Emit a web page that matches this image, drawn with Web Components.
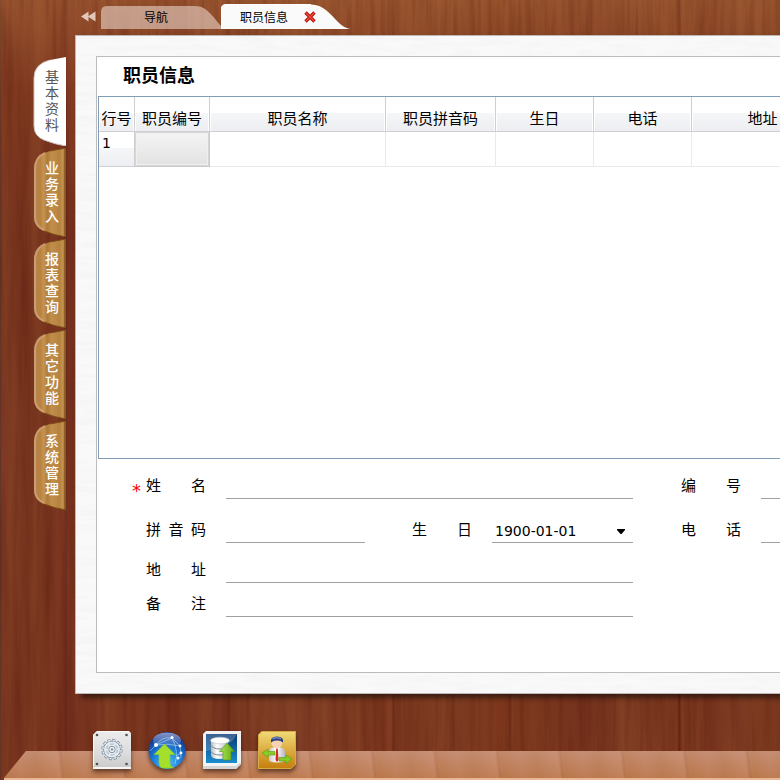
<!DOCTYPE html>
<html lang="zh-CN">
<head>
<meta charset="utf-8">
<meta name="viewport" content="width=device-width, initial-scale=1">
<title>职员信息</title>
<style>
  html, body {
    height: 100%;
  }
  body {
    margin: 0;
    overflow: hidden;
    color: #000;
    font-family: "Noto Sans CJK SC", sans-serif;
    font-size: 15px;
  }
</style>
</head>
<body>
<desk-app>
  <tab-strip slot="tabs">
    <page-tab>导航</page-tab>
    <page-tab active>职员信息</page-tab>
  </tab-strip>
  <side-nav slot="side">
    <side-tab active>基本资料</side-tab>
    <side-tab>业务录入</side-tab>
    <side-tab>报表查询</side-tab>
    <side-tab>其它功能</side-tab>
    <side-tab>系统管理</side-tab>
  </side-nav>
  <paper-panel heading="职员信息">
    <staff-table></staff-table>
    <staff-form>
      <form-field label="姓　　名" required wide></form-field>
      <form-field label="编　　号"></form-field>
      <form-field label="拼&ensp;音&ensp;码"></form-field>
      <form-field label="生　　日" value="1900-01-01" type="select"></form-field>
      <form-field label="电　　话"></form-field>
      <form-field label="地　　址" wide line></form-field>
      <form-field label="备　　注" wide line></form-field>
    </staff-form>
  </paper-panel>
  <app-dock slot="dock"></app-dock>
</desk-app>

<script>
class DeskApp extends HTMLElement {
  connectedCallback() {
    this.attachShadow({ mode: 'open' });
    this.shadowRoot.innerHTML = `
      <style>
        :host {
          display: grid;
          grid-template: 35px minmax(0, 1fr) 86px / 75px minmax(0, 1fr);
          position: relative;
          z-index: 0;
          height: 100%;
          min-height: 640px;
          overflow: hidden;
          background:
            linear-gradient(rgba(190, 122, 66, .42), rgba(160, 80, 40, .2) 90px, rgba(60, 10, 0, 0) 240px),
            linear-gradient(90deg,
              #5e3327 0, #5e3327 1px, #79351f 2px, #74311c 28px, #7c3920 34px, #722c1a 64px,
              #65261a 66px, #742f1d 68px, #7b371f 110px, #722e1a 170px, #7d3a22 205px,
              #76321d 226px, #662718 229px, #7b3820 231px, #7e3d24 290px, #7a351d 392px,
              #672716 393px, #7a371e 395px, #7c3a20 460px, #783219 508px, #642414 510px,
              #7b371d 512px, #73301c 590px, #7c3a22 620px, #7b371e 677px, #622111 679px,
              #7b381f 682px, #74301b 710px, #7d3b22 740px, #77341b 100%);
        }
        .grain {
          position: absolute;
          inset: 0;
          z-index: -1;
          width: 100%;
          height: 100%;
        }
        .tabs, .dock {
          grid-column: 1 / -1;
        }
        .panel {
          min-width: 0;
        }
      </style>
      <svg class="grain" aria-hidden="true">
        <filter id="wood" x="0" y="0" width="100%" height="100%" color-interpolation-filters="sRGB">
          <feTurbulence type="fractalNoise" baseFrequency="0.16 0.008" numOctaves="4" seed="8"/>
          <feColorMatrix values="0 0 0 0 .3  0 0 0 0 .08  0 0 0 0 .03  .6 0 0 0 -.24"/>
        </filter>
        <filter id="sheen" x="0" y="0" width="100%" height="100%" color-interpolation-filters="sRGB">
          <feTurbulence type="fractalNoise" baseFrequency="0.06 0.003" numOctaves="3" seed="3"/>
          <feColorMatrix values="0 0 0 0 .7  0 0 0 0 .42  0 0 0 0 .25  .4 0 0 0 -.17"/>
        </filter>
        <rect width="100%" height="100%" filter="url(#wood)"/>
        <rect width="100%" height="100%" filter="url(#sheen)"/>
      </svg>
      <header class="tabs"><slot name="tabs"></slot></header>
      <slot name="side"></slot>
      <main class="panel"><slot></slot></main>
      <footer class="dock"><slot name="dock"></slot></footer>
    `;
  }
}

class TabStrip extends HTMLElement {
  connectedCallback() {
    this.attachShadow({ mode: 'open' });
    this.shadowRoot.innerHTML = `
      <style>
        :host {
          display: flex;
          align-items: flex-end;
          height: 29px;
          padding-left: 81px;
        }
        button {
          width: 20px;
          height: 24px;
          padding: 0;
          border: 0;
          background: none;
          cursor: pointer;
        }
        svg {
          display: block;
        }
      </style>
      <button type="button" aria-label="向左滚动">
        <svg width="16" height="24" viewBox="0 0 16 24"><path d="M0 11.500 7.500 6.500V11L14.500 6.500V16.500L7.500 12V16.500z" fill="#e3c6ba"/></svg>
      </button>
      <slot></slot>
    `;
  }
}

class PageTab extends HTMLElement {
  connectedCallback() {
    const active = this.hasAttribute('active');
    const shape = active
      ? '<svg width="130" height="25" viewBox="0 0 130 25"><path d="M0 25V5Q0 .5 5 .5H90C103 .5 110 11 117 18Q124 25 130 25z" fill="#fafafa"/><path d="M.5 24V5Q.5 .5 5 .5H90" fill="none" stroke="#fff"/></svg>'
      : '<svg width="120" height="25" viewBox="0 0 120 25"><path d="M0 25V8Q0 2 6 2H94C106 2 112 13 120 22V25z" fill="#e6cfc4" fill-opacity=".62"/></svg>';
    const close = active
      ? '<button class="close" type="button" aria-label="关闭"><svg width="12" height="12" viewBox="0 0 12 12"><path d="M1.500 1.500 10.500 10.500M10.500 1.500 1.500 10.500" stroke="#b3130c" stroke-width="3.400"/><path d="M2 2 10 10M10 2 2 10" stroke="#f04a3a" stroke-width="1.400"/></svg></button>'
      : '';
    this.attachShadow({ mode: 'open' });
    this.shadowRoot.innerHTML = `
      <style>
        :host {
          display: flex;
          align-items: center;
          position: relative;
          z-index: 0;
          box-sizing: border-box;
          width: ${active ? 130 : 120}px;
          height: 25px;
          padding-left: ${active ? 19 : 43}px;
          gap: 16px;
        }
        .shape {
          position: absolute;
          inset: 0;
          z-index: -1;
        }
        button {
          padding: 0;
          border: 0;
          background: none;
          color: inherit;
          font: 12px/24px "Noto Sans CJK SC", sans-serif;
          cursor: pointer;
        }
        svg {
          display: block;
        }
      </style>
      <div class="shape">${shape}</div>
      <button type="button"><slot></slot></button>
      ${close}
    `;
  }
}

class SideNav extends HTMLElement {
  connectedCallback() {
    this.attachShadow({ mode: 'open' });
    this.shadowRoot.innerHTML = `
      <style>
        nav {
          display: flex;
          flex-direction: column;
          align-items: flex-end;
          gap: 2px;
          padding: 22px 9px 0 0;
        }
      </style>
      <nav><slot></slot></nav>
    `;
  }
}

class SideTab extends HTMLElement {
  connectedCallback() {
    const active = this.hasAttribute('active');
    this.attachShadow({ mode: 'open' });
    this.shadowRoot.innerHTML = `
      <style>
        :host {
          display: block;
          color: ${active ? '#555' : '#fff'};
        }
        button {
          display: flex;
          justify-content: center;
          align-items: center;
          position: relative;
          z-index: 0;
          box-sizing: border-box;
          width: 33px;
          height: 89px;
          padding: 0 0 4px 5px;
          border: 0;
          background: none;
          color: inherit;
          font: ${active ? 400 : 500} 14px/16px "Noto Sans CJK SC", sans-serif;
          cursor: pointer;
        }
        svg {
          position: absolute;
          inset: 0;
          z-index: -1;
        }
        span {
          width: 14px;
          word-break: break-all;
        }
      </style>
      <button type="button">
        <svg width="33" height="89" viewBox="0 0 33 89" aria-hidden="true">
          <defs>
            <linearGradient id="wood">
              <stop offset="0" stop-color="#b58350"/>
              <stop offset=".2" stop-color="#b9833f"/>
              <stop offset=".3" stop-color="#c59350"/>
              <stop offset=".42" stop-color="#b07b38"/>
              <stop offset=".55" stop-color="#c28e4b"/>
              <stop offset=".8" stop-color="#b68240"/>
              <stop offset=".9" stop-color="#c49350"/>
              <stop offset="1" stop-color="#8a5a1d"/>
            </linearGradient>
          </defs>
          <path d="M33 0 17 3Q1 7 1 21V69Q1 79 11 83Q21 87 33 89z" fill="${active ? '#fff' : 'url(#wood)'}"/>
          ${active
            ? '<path d="M17 3Q1 7 1 21V69Q1 79 11 83Q21 87 33 89" fill="none" stroke="#ccc5c2"/>'
            : `<path d="M12 5Q2 9 2 21V69Q2 78 11 82" fill="none" stroke="#d3a583" stroke-opacity=".75" stroke-width="2"/>
               <path d="M33 0 17 3M11 83Q21 87 33 89M32 0V89" fill="none" stroke="#7d4e16"/>`}
        </svg>
        <span><slot></slot></span>
      </button>
    `;
  }
}

class PaperPanel extends HTMLElement {
  connectedCallback() {
    this.attachShadow({ mode: 'open' });
    this.shadowRoot.innerHTML = `
      <style>
        :host {
          display: block;
          position: relative;
          z-index: 0;
          box-sizing: border-box;
          height: 100%;
          min-width: 960px;
          padding: 20px;
          border: 1px solid #bdb9b8;
          background: #f9f9f9;
          box-shadow: 6px 4px 5px rgba(20, 12, 8, .6);
        }
        .fibre {
          position: absolute;
          inset: 0;
          z-index: -1;
          width: 100%;
          height: 100%;
        }
        section {
          display: flex;
          flex-direction: column;
          box-sizing: border-box;
          height: 100%;
          padding: 0 1px 55px;
          border: 1px solid #bcbcbc;
          background: #fff;
        }
        h1 {
          margin: 0;
          padding: 0 0 4px 25px;
          font-size: 18px;
          font-weight: 700;
          line-height: 35px;
        }
      </style>
      <svg class="fibre" aria-hidden="true">
        <filter id="paper" x="0" y="0" width="100%" height="100%">
          <feTurbulence type="fractalNoise" baseFrequency="0.03 0.2" numOctaves="3" seed="5"/>
          <feColorMatrix values="0 0 0 0 .5  0 0 0 0 .5  0 0 0 0 .5  .16 0 0 0 -.06"/>
        </filter>
        <rect width="100%" height="100%" filter="url(#paper)"/>
      </svg>
      <section>
        <h1>${this.getAttribute('heading')}</h1>
        <slot></slot>
      </section>
    `;
  }
}

class StaffTable extends HTMLElement {
  connectedCallback() {
    this.attachShadow({ mode: 'open' });
    this.shadowRoot.innerHTML = `
      <style>
        :host {
          display: block;
          flex: 1;
          min-height: 0;
          overflow: hidden;
          border: 1px solid #7f9db9;
        }
        table {
          width: 100%;
          table-layout: fixed;
          border-collapse: separate;
          border-spacing: 0;
        }
        .no { width: 36px; }
        .code { width: 75px; }
        .name { width: 176px; }
        .pinyin { width: 110px; }
        .short { width: 98px; }
        .address { width: 142px; }
        th, td {
          box-sizing: border-box;
          height: 35px;
          padding: 0;
          border-right: 1px solid #ece9e9;
          border-bottom: 1px solid #ece9e9;
          font-weight: 400;
          white-space: nowrap;
        }
        thead th {
          padding-top: 8px;
          border-color: #cfcfcf;
          background: linear-gradient(#fff 16px, #f5f6f8 16px, #eceef1);
          box-shadow: inset 1px 0 #fff, inset -1px 0 #fff;
          line-height: 24px;
        }
        tbody th {
          padding-left: 3px;
          border-color: #cfcfcf;
          background: linear-gradient(#fff 16px, #f5f6f8 16px, #eceef1);
          font: 14px/23px "DejaVu Sans", sans-serif;
          text-align: left;
          vertical-align: top;
        }
        .selected {
          border-color: #c9c9c9;
          background: linear-gradient(#f4f4f4, #e2e2e2);
          box-shadow: inset 0 0 0 1px #d6d6d6, inset 0 0 0 2px #f0f0f0;
        }
      </style>
      <table>
        <colgroup>
          <col class="no"><col class="code"><col class="name"><col class="pinyin">
          <col class="short"><col class="short"><col class="address"><col>
        </colgroup>
        <thead>
          <tr>
            <th scope="col">行号</th>
            <th scope="col">职员编号</th>
            <th scope="col">职员名称</th>
            <th scope="col">职员拼音码</th>
            <th scope="col">生日</th>
            <th scope="col">电话</th>
            <th scope="col">地址</th>
            <th scope="col"></th>
          </tr>
        </thead>
        <tbody>
          <tr>
            <th scope="row">1</th>
            <td class="selected"></td>
            <td></td>
            <td></td>
            <td></td>
            <td></td>
            <td></td>
            <td></td>
          </tr>
        </tbody>
      </table>
    `;
  }
}

class StaffForm extends HTMLElement {
  connectedCallback() {
    this.attachShadow({ mode: 'open' });
    this.shadowRoot.innerHTML = `
      <style>
        form {
          display: grid;
          grid-template-columns: 74px 139px 87px 141px 88px minmax(140px, 1fr);
          grid-template-rows: 40px 44px 40px 34px;
          column-gap: 20px;
          align-items: end;
          padding: 0 20px 0 34px;
        }
      </style>
      <form><slot></slot></form>
    `;
  }
}

class FormField extends HTMLElement {
  connectedCallback() {
    const value = this.getAttribute('value') || '';
    const control = this.getAttribute('type') === 'select'
      ? `<div class="select">
           <select id="control"><option>${value}</option></select>
           <svg width="8" height="5" viewBox="0 0 8 5" aria-hidden="true"><path d="M0 0H8V1L4.500 5H3.500L0 1z"/></svg>
         </div>`
      : `<input id="control" type="text" value="${value}">`;
    this.attachShadow({ mode: 'open' });
    this.shadowRoot.innerHTML = `
      <style>
        :host {
          display: grid;
          grid-template-columns: subgrid;
          grid-column: span 2;
          line-height: 26px;
        }
        :host([wide]) {
          grid-column: span 4;
        }
        :host([line]) {
          grid-column: 1 / 5;
        }
        label {
          text-align: right;
          white-space: nowrap;
        }
        .star {
          margin-right: 5px;
          color: #f00;
          font: 18px/1 "DejaVu Sans", sans-serif;
          vertical-align: -6px;
          line-height: 0;
        }
        input, select {
          box-sizing: border-box;
          width: 100%;
          height: 27px;
          margin: 0;
          padding: 4px 3px 0;
          border: 0;
          border-bottom: 1px solid #a0a0a0;
          border-radius: 0;
          outline: 0;
          background: transparent;
          color: inherit;
          font: 14px/20px "DejaVu Sans", sans-serif;
          appearance: none;
        }
        input, .select {
          grid-column: 2 / -1;
        }
        .select {
          display: grid;
          align-items: center;
        }
        .select > * {
          grid-area: 1 / 1;
        }
        svg {
          justify-self: end;
          margin: 4px 8px 0 0;
          pointer-events: none;
        }
      </style>
      <label for="control">${this.hasAttribute('required') ? '<span class="star">*</span>' : ''}${this.getAttribute('label')}</label>
      ${control}
    `;
  }
}

class AppDock extends HTMLElement {
  connectedCallback() {
    this.attachShadow({ mode: 'open' });
    this.shadowRoot.innerHTML = `
      <style>
        :host {
          display: block;
          position: relative;
          z-index: 0;
          height: 86px;
        }
        .shelf {
          position: absolute;
          inset: auto 0 0 4px;
          z-index: -1;
          height: 29px;
          border-bottom: 2px solid #eab794;
          box-sizing: border-box;
        }
        .board {
          height: 27px;
          clip-path: polygon(22px 0, 100% 0, 100% 100%, 0 100%);
          background:
            linear-gradient(rgba(205, 160, 145, .4), rgba(185, 115, 65, .4)),
            repeating-linear-gradient(83deg, #b9784f 0, #c18362 18px, #bb7b55 34px, #c68a6a 56px, #b37049 59px, #bd7d58 62px);
        }
        nav {
          display: flex;
          gap: 17px;
          padding: 37px 0 0 93px;
        }
        button {
          width: 38px;
          height: 38px;
          padding: 0;
          border: 0;
          background: none;
          cursor: pointer;
          filter: drop-shadow(0 3px 2px rgba(40, 15, 5, .6));
        }
        svg {
          display: block;
        }
      </style>
      <div class="shelf"><div class="board"></div></div>
      <nav>
        <button type="button" aria-label="设置">
          <svg width="38" height="38" viewBox="0 0 38 38">
            <defs><linearGradient id="metal" x2="0" y2="1"><stop stop-color="#ececec"/><stop offset=".6" stop-color="#dcdcdc"/><stop offset="1" stop-color="#c9c9c9"/></linearGradient></defs>
            <path d="M4 0H36L38 2V38H0V4z" fill="url(#metal)"/>
            <path d="M.5 35V4L4 .5H36" fill="none" stroke="#fafafa"/>
            <path d="M0 37H38" stroke="#f6f6f6" stroke-width="2"/>
            <g fill="#505050"><circle cx="4" cy="4" r="1.300"/><circle cx="33.500" cy="4" r="1.300"/><circle cx="4" cy="33" r="1.300"/><circle cx="33.500" cy="33" r="1.300"/></g>
            <circle cx="19" cy="18.500" r="9.500" fill="none" stroke="#8293a4" stroke-width="2.400" stroke-dasharray="3 1.970"/>
            <circle cx="19" cy="18.500" r="8.500" fill="#e6ebf0" stroke="#8293a4"/>
            <circle cx="19" cy="18.500" r="9.200" fill="none" stroke="#e9eef3" stroke-width="1.400" stroke-dasharray="2 2.820" stroke-dashoffset="-.5"/>
            <circle cx="19" cy="18.500" r="5.500" fill="none" stroke="#b9c4cf" stroke-width="1.600" stroke-dasharray="4 1.760"/>
            <circle cx="19" cy="18.500" r="3.200" fill="#f2f5f8" stroke="#8293a4"/>
            <circle cx="19" cy="18.500" r="1.300" fill="#8796a5"/>
          </svg>
        </button>
        <button type="button" aria-label="上传">
          <svg width="38" height="38" viewBox="0 0 38 38">
            <defs>
              <radialGradient id="globe" cx=".5" cy=".85" r=".9"><stop stop-color="#4cc2fb"/><stop offset=".45" stop-color="#1c7bd8"/><stop offset=".8" stop-color="#113d9c"/><stop offset="1" stop-color="#0c2676"/></radialGradient>
              <linearGradient id="gloss" x2="0" y2="1"><stop stop-color="#fff" stop-opacity=".5"/><stop offset="1" stop-color="#fff" stop-opacity="0"/></linearGradient>
            </defs>
            <circle cx="19" cy="19.500" r="18.500" fill="url(#globe)"/>
            <ellipse cx="19" cy="9.500" rx="14" ry="8" fill="url(#gloss)"/>
            <path d="M8 14 24 7 32 15 33 27M8 14 2 20M8 14Q14 5 24 7M24 7Q31 20 27 33M8 14Q20 12 32 15M28 25 33 22" fill="none" stroke="#c8e9ff" stroke-opacity=".75" stroke-width=".7"/>
            <g fill="#fff"><circle cx="8" cy="14" r="2"/><circle cx="24" cy="6.500" r="1.500"/><circle cx="32" cy="15" r="1.400"/><circle cx="33" cy="22" r="1.400"/><circle cx="30" cy="27" r="1.500"/></g>
            <path d="M16.500 13 27 23.500H22V32Q22 36 26 37H14Q11 36 11 31V23.500H6z" fill="#a4df2c" stroke="#8bc91d" stroke-width=".6"/>
          </svg>
        </button>
        <button type="button" aria-label="数据备份">
          <svg width="38" height="38" viewBox="0 0 38 38">
            <defs>
              <linearGradient id="blue" x2="0" y2="1"><stop stop-color="#0c356b"/><stop offset="1" stop-color="#198ed2"/></linearGradient>
              <linearGradient id="steel"><stop stop-color="#b8bcc0"/><stop offset=".35" stop-color="#fff"/><stop offset="1" stop-color="#b9bec4"/></linearGradient>
              <linearGradient id="green"><stop stop-color="#b0e456"/><stop offset="1" stop-color="#5cab14"/></linearGradient>
            </defs>
            <path d="M3 0H38V33L33 38H0V3z" fill="#f3f3f3"/>
            <path d="M0 35H33L38 31V33L33 38H0z" fill="#d3d5d6"/>
            <path d="M3 3H34V32H3z" fill="url(#blue)"/>
            <path d="M3 3H34Q30 15 3 20z" fill="#a8cbe5" opacity=".3"/>
            <path d="M8 10V24Q8 28 17 28Q25 28 25 24V10z" fill="url(#steel)"/>
            <ellipse cx="17" cy="9.500" rx="9.500" ry="3.300" fill="#fff" stroke="#bcc2c7" stroke-width=".6"/>
            <path d="M7.500 14Q10 18 17 18T25 14M7.500 20Q10 24 17 24T25 20" fill="none" stroke="#7c8a97" stroke-width="1"/>
            <path d="M24 12 31.500 20.500H28V29H20V20.500H16.500z" fill="url(#green)" stroke="#4d9410" stroke-width=".6"/>
          </svg>
        </button>
        <button type="button" aria-label="切换用户">
          <svg width="38" height="38" viewBox="0 0 38 38">
            <defs>
              <linearGradient id="gold" x2="0" y2="1"><stop stop-color="#f2dc78"/><stop offset="1" stop-color="#c47d0c"/></linearGradient>
              <linearGradient id="shirt"><stop stop-color="#c5c5ce"/><stop offset=".45" stop-color="#fff"/><stop offset="1" stop-color="#b7b7c2"/></linearGradient>
            </defs>
            <path d="M4 0H38V33L33 38H0V4z" fill="url(#gold)"/>
            <path d="M.5 37.500V4L4 .5H37.500V33L33 37.500z" fill="none" stroke="#d7ad43"/>
            <path d="M11 30V22Q11 16.500 16 16.500H22Q27 16.500 27 22V30Q19 33 11 30z" fill="url(#shirt)"/>
            <path d="M16 16.500 19 21 22 16.500" fill="#fff"/>
            <path d="M18.200 17.500H19.800L20.500 29 19 31 17.500 29z" fill="#d82620"/>
            <circle cx="19" cy="11.500" r="5.500" fill="#f6d2b2"/>
            <path d="M13 11.500Q12 5.500 19 5.500Q26 5.500 25 11.500Q22 9 19 9.500Q16 9 13 11.500z" fill="#253b76"/>
            <path d="M14.500 8Q19 5.500 23 8" fill="none" stroke="#7387c4" stroke-width="1.500"/>
            <g fill="#86cc28" stroke="#579a12" stroke-width=".6"><path d="M4 22 10 18V20.500H17V24H10V26.500z"/><path d="M34 28 28 24V26.500H21V30H28V32.500z"/></g>
          </svg>
        </button>
      </nav>
    `;
  }
}

customElements.define('desk-app', DeskApp);
customElements.define('tab-strip', TabStrip);
customElements.define('page-tab', PageTab);
customElements.define('side-nav', SideNav);
customElements.define('side-tab', SideTab);
customElements.define('paper-panel', PaperPanel);
customElements.define('staff-table', StaffTable);
customElements.define('staff-form', StaffForm);
customElements.define('form-field', FormField);
customElements.define('app-dock', AppDock);
</script>
</body>
</html>
